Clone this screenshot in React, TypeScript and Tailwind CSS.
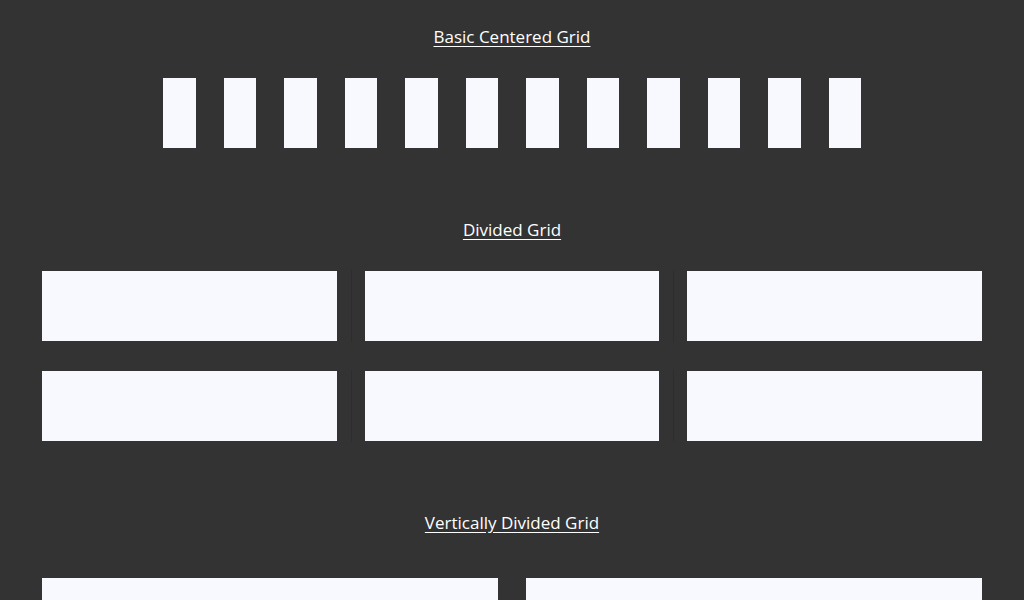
export default function App() {
  const twelve = Array.from({ length: 12 });
  const six = Array.from({ length: 6 });

  return (
    <div className="min-h-screen bg-[#333333] font-['Open_Sans',sans-serif] text-white">
      <section className="flex flex-col items-center pt-[25px]">
        <h2 className="text-[17px] leading-[24px] underline underline-offset-[3px]">Basic Centered Grid</h2>
        <div className="mt-[29px] grid w-[698px] grid-cols-12 gap-[28px]">
          {twelve.map((_, i) => (
            <div key={i} className="h-[70px] bg-[#f8f9fe]" />
          ))}
        </div>
      </section>

      <section className="mt-[70px] flex flex-col items-center">
        <h2 className="text-[17px] leading-[24px] underline underline-offset-[3px]">Divided Grid</h2>
        <div className="mt-[29px] grid w-[940px] grid-cols-3 gap-x-[28px] gap-y-[30px]">
          {six.map((_, i) => (
            <div key={i} className="relative h-[70px] bg-[#f8f9fe]">
              {i % 3 !== 2 && (
                <span className="absolute -top-[1px] -bottom-[1px] left-[calc(100%+14px)] w-px bg-[#2d2d2d]" />
              )}
            </div>
          ))}
        </div>
      </section>

      <section className="mt-[70px] flex flex-col items-center pb-10">
        <h2 className="text-[17px] leading-[24px] underline underline-offset-[3px]">Vertically Divided Grid</h2>
        <div className="mt-[43px] grid w-[940px] grid-cols-2 gap-[28px]">
          <div className="h-[70px] bg-[#f8f9fe]" />
          <div className="h-[70px] bg-[#f8f9fe]" />
        </div>
      </section>
    </div>
  );
}
